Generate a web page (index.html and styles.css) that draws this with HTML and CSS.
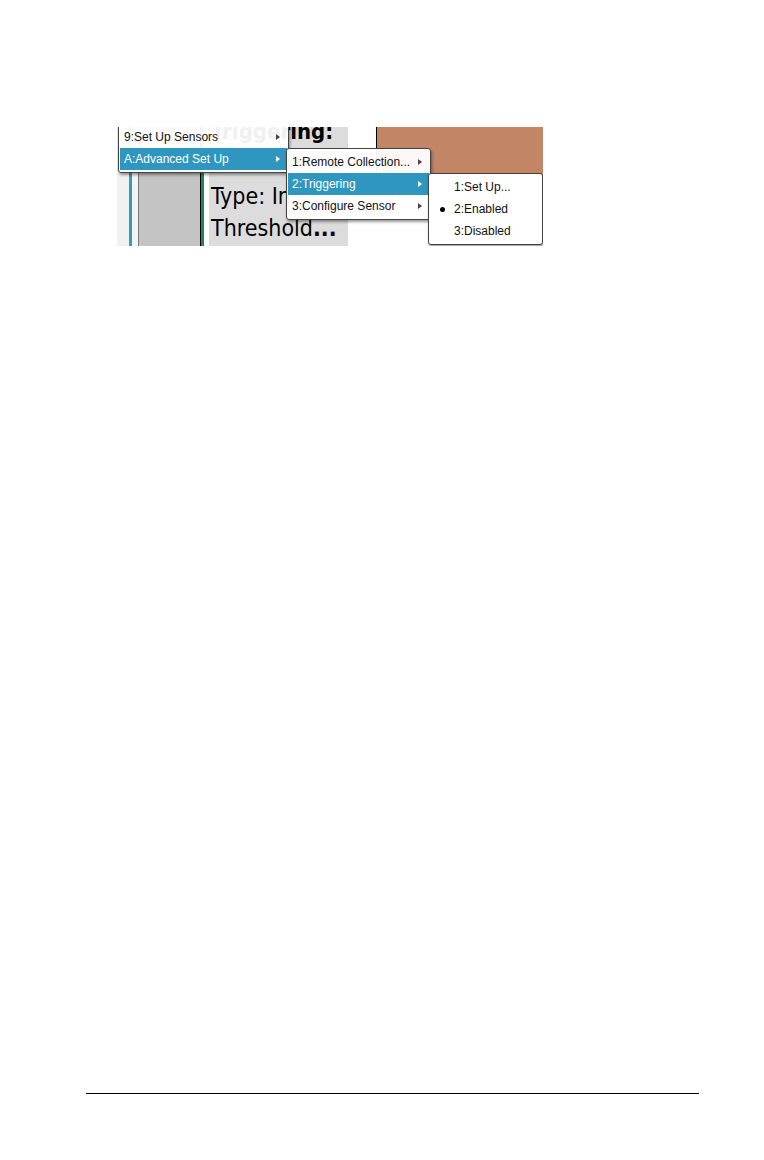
FILE: index.html
```html
<!DOCTYPE html>
<html lang="en">
<head>
    <meta charset="UTF-8">
    <meta name="viewport" content="width=device-width, initial-scale=1.0">
    <title>Triggering</title>
    <link rel="stylesheet" href="styles.css">
</head>
<body>

    <main>
        <div class="screen">
            <!-- Panes behind the menus -->
            <div class="workspace">
                <div class="edge"></div>
                <div class="tools"></div>
                <div class="details">
                    <h1>Triggering:</h1>
                    <p>Type: In</p>
                    <p>Threshold<b>...</b></p>
                </div>
                <div class="graph"></div>
            </div>

            <!-- Experiment menu -->
            <div class="menu menu-main">
                <button type="button">9:Set Up Sensors <svg viewBox="0 0 4 6"><path d="M0 0L4 3L0 6Z"/></svg></button>
                <button type="button" class="active">A:Advanced Set Up <svg viewBox="0 0 4 6"><path d="M0 0L4 3L0 6Z"/></svg></button>
            </div>

            <!-- Advanced Set Up -->
            <div class="menu menu-advanced">
                <button type="button">1:Remote Collection... <svg viewBox="0 0 4 6"><path d="M0 0L4 3L0 6Z"/></svg></button>
                <button type="button" class="active">2:Triggering <svg viewBox="0 0 4 6"><path d="M0 0L4 3L0 6Z"/></svg></button>
                <button type="button">3:Configure Sensor <svg viewBox="0 0 4 6"><path d="M0 0L4 3L0 6Z"/></svg></button>
            </div>

            <!-- Triggering -->
            <div class="menu menu-trigger">
                <button type="button">1:Set Up...</button>
                <button type="button" class="checked">2:Enabled</button>
                <button type="button">3:Disabled</button>
            </div>
        </div>
    </main>

    <footer></footer>

</body>
</html>
```

FILE: styles.css
```css
/* Basic Reset */
* {
    margin: 0;
    padding: 0;
    box-sizing: border-box;
}

/* Page */
body {
    display: flex;
    flex-direction: column;
    min-height: 100vh;
    padding: 127px 65px 66px 86px;
    background-color: white;
    color: black;
    font-family: "Liberation Sans", Arial, sans-serif;
}

main {
    flex: 1;
    padding-left: 31px;
}

footer {
    border-top: 1px solid black;
}

/* Cropped calculator screen */
.screen {
    position: relative;
    max-width: 426px;
    overflow: hidden;
}

.workspace {
    display: flex;
    height: 119px;
}

.edge {
    width: 21px;
    background-color: #f1f1f1;
    border-right: 6px solid #f4f4f4;
    box-shadow: inset -3px 0 #3799c0;
}

.tools {
    width: 66px;
    background-color: #c4c4c4;
    border-left: 1px solid #777;
    border-right: 3px solid #1f8560;
    box-shadow: inset -1px 0 black;
}

/* Trigger details */
.details {
    width: 144px;
    padding-left: 2px;
    background-color: #dcdcdc;
    border-left: 5px solid white;
    font-family: "DejaVu Sans Condensed", "DejaVu Sans", sans-serif;
    font-size: 23px;
    line-height: 32px;
    white-space: nowrap;
    overflow: hidden;
}

.details h1 {
    margin: -11px 0 32px;
    font-size: 22px;
}

.graph {
    flex: 1;
    height: 52px;
    margin-left: 28px;
    background-color: #c28566;
    border-left: 1px solid black;
}

/* Menus */
.menu {
    position: absolute;
    display: flex;
    flex-direction: column;
    padding: 2px 1px;
    background-color: rgba(255, 255, 255, 0.94);
    border: 1px solid #444;
    border-radius: 3px;
    box-shadow: 1px 2px 3px rgba(0, 0, 0, 0.4);
}

.menu button {
    display: flex;
    align-items: center;
    justify-content: space-between;
    height: 22px;
    padding: 0 7px 0 4px;
    background: none;
    border: none;
    color: #111;
    font-family: inherit;
    font-size: 12px;
    text-align: left;
}

.menu .active {
    background-color: #2f96bf;
    color: white;
}

.menu svg {
    width: 4px;
    height: 6px;
    fill: #444;
}

.menu .active svg {
    fill: white;
}

.menu-main {
    top: -4px;
    left: 1px;
    width: 171px;
}

.menu-advanced {
    top: 21px;
    left: 169px;
    width: 145px;
}

.menu-trigger {
    top: 46px;
    left: 311px;
    width: 115px;
    background-color: white;
}

.menu-trigger button {
    position: relative;
    padding-left: 24px;
}

.menu-trigger .checked::before {
    content: "";
    position: absolute;
    left: 10px;
    width: 5px;
    height: 5px;
    border-radius: 50%;
    background-color: black;
}
```
